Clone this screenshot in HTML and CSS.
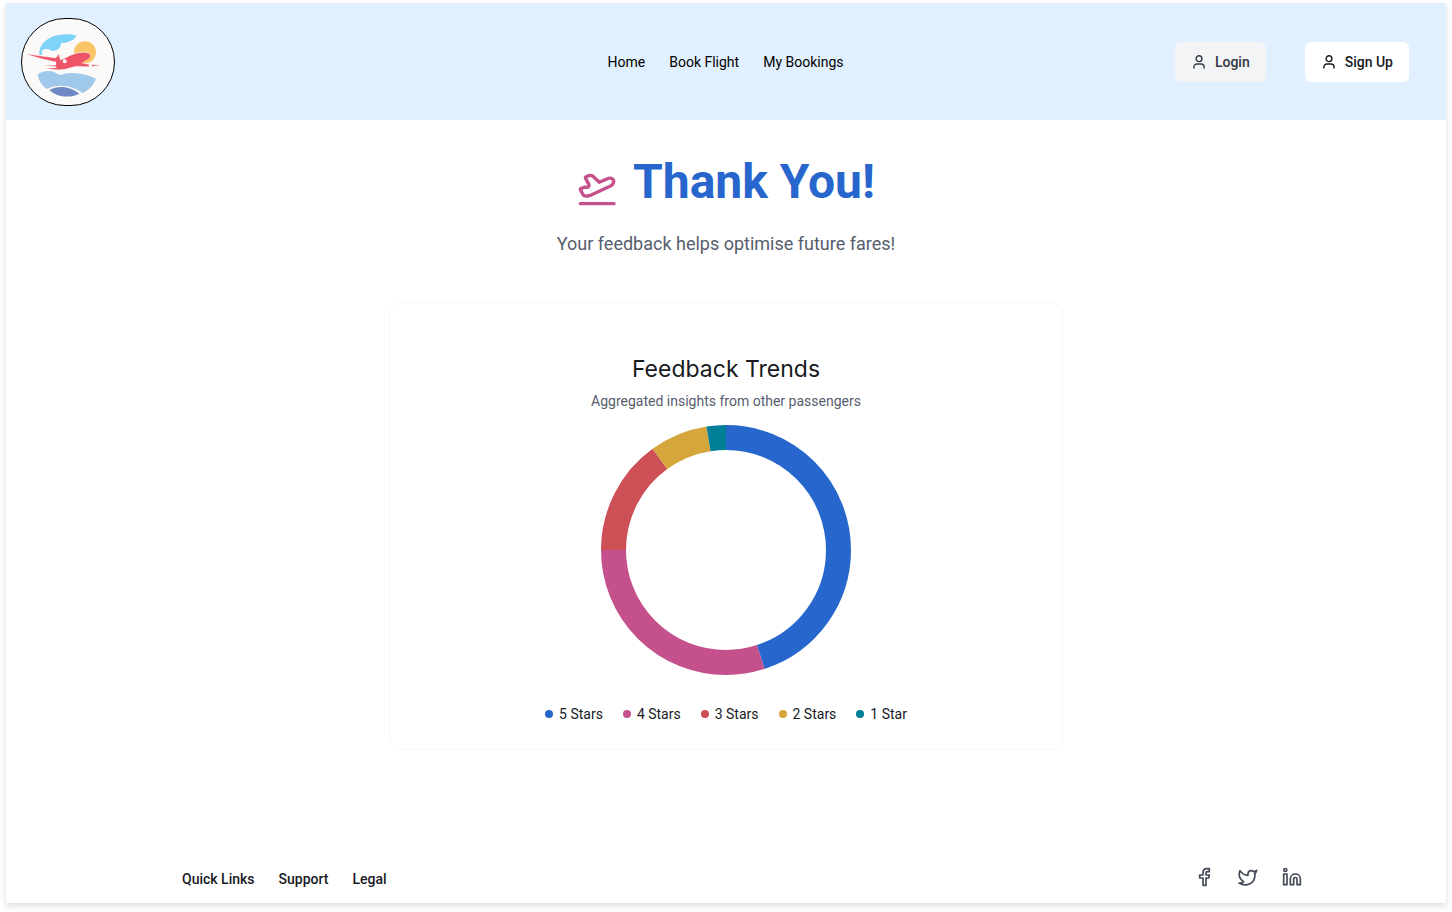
FILE: index.html
```html
<!DOCTYPE html>
<html lang="en">
<head>
<meta charset="utf-8">
<meta name="viewport" content="width=device-width, initial-scale=1">
<title>Thank You</title>
<link rel="stylesheet" href="styles.css">
</head>
<body>
<div class="page">
  <header class="header">
    <a class="logo" href="#" aria-label="Home page">
      <svg viewBox="66 57 276 258" aria-hidden="true">
        <path fill="#7dd3f8" d="M118 165C116 140 133 120 160 109C184 101 210 101 229 106C226 118 212 126 192 129L183 130C183 143 174 151 162 152C158 154 154 153 151 149C143 146 131 146 126 152C125 157 126 161 126 165Z"/>
        <circle cx="255" cy="157" r="33" fill="#f9c566"/>
        <path fill="#ee5468" stroke="#fcfaf8" stroke-width="1" d="M80 162L166 174L170 171C174 168 173 163 176 161L181 180L188 178L212 166C230 158 252 154 264 159C273 163 273 171 266 177L246 189L270 194L302 195L272 200L228 199L204 205C190 212 154 209 138 205L170 203L166 199L128 197L168 195L168 186C140 180 105 172 80 162Z"/>
        <path fill="none" stroke="#fcfaf8" stroke-width="1.5" d="M212 165C230 157 252 153 265 158"/>
        <circle cx="194" cy="184" r="6" fill="#fcfaf8"/>
        <circle cx="271" cy="197" r="5" fill="#fcfaf8"/>
        <path fill="#9fc8ea" d="M113 224C126 212 146 210 162 216C171 220 176 225 181 225C210 213 255 219 288 236C281 255 267 270 248 279C219 257 172 249 141 267C126 257 116 242 113 224Z"/>
        <path fill="#7088c4" d="M148 270C176 254 212 260 238 281C211 295 171 293 148 270Z"/>
      </svg>
    </a>
    <nav class="nav" aria-label="Main">
      <a href="#">Home</a>
      <a href="#">Book Flight</a>
      <a href="#">My Bookings</a>
    </nav>
    <div class="actions">
      <button class="btn btn-muted" type="button">
        <svg viewBox="0 0 16 16" aria-hidden="true"><circle cx="8" cy="4.7" r="2.9"/><path d="M2.9 14.6V13a3 3 0 0 1 3-3h4.2a3 3 0 0 1 3 3v1.6"/></svg>
        Login
      </button>
      <button class="btn btn-light" type="button">
        <svg viewBox="0 0 16 16" aria-hidden="true"><circle cx="8" cy="4.7" r="2.9"/><path d="M2.9 14.6V13a3 3 0 0 1 3-3h4.2a3 3 0 0 1 3 3v1.6"/></svg>
        Sign Up
      </button>
    </div>
  </header>

  <main class="main">
    <div class="title">
      <svg class="title-icon" viewBox="51 60 120 120" aria-hidden="true">
        <path d="M61 118L69 134Q73 140 82 138L92 136L153 107Q162 102 161 92Q157 82 146 85L118 97L99 79Q94 75 87 77L77 81Q75 83 77 86L87 104Q88 109 84 111Q80 113 76 111L71 113L63 115Q60 116 61 118Z"/>
        <path d="M61 161H162"/>
      </svg>
      <h1>Thank You!</h1>
    </div>
    <p class="subtitle">Your feedback helps optimise future fares!</p>

    <section class="card" aria-labelledby="trends">
      <h2 id="trends">Feedback Trends</h2>
      <p class="card-note">Aggregated insights from other passengers</p>
      <svg class="donut" viewBox="0 0 250 250" role="img" aria-label="Share of ratings by stars">
        <g transform="rotate(-90 125 125)">
          <circle class="s5" cx="125" cy="125" r="112.5" pathLength="1000" stroke-dasharray="450 550"/>
          <circle class="s4" cx="125" cy="125" r="112.5" pathLength="1000" stroke-dasharray="300 700" stroke-dashoffset="-450"/>
          <circle class="s3" cx="125" cy="125" r="112.5" pathLength="1000" stroke-dasharray="150 850" stroke-dashoffset="-750"/>
          <circle class="s2" cx="125" cy="125" r="112.5" pathLength="1000" stroke-dasharray="75 925" stroke-dashoffset="-900"/>
          <circle class="s1" cx="125" cy="125" r="112.5" pathLength="1000" stroke-dasharray="25 975" stroke-dashoffset="-975"/>
        </g>
      </svg>
      <ul class="legend">
        <li class="s5"><span>5 Stars</span></li>
        <li class="s4"><span>4 Stars</span></li>
        <li class="s3"><span>3 Stars</span></li>
        <li class="s2"><span>2 Stars</span></li>
        <li class="s1"><span>1 Star</span></li>
      </ul>
    </section>
  </main>

  <footer class="footer">
    <nav class="footer-links" aria-label="Footer">
      <a href="#">Quick Links</a>
      <a href="#">Support</a>
      <a href="#">Legal</a>
    </nav>
    <div class="social">
      <a href="#" aria-label="Facebook"><svg viewBox="42 51 60 60" aria-hidden="true"><path d="M88 56H81Q69 56 69 68V75H59V84H69V106H78V84H86L88 75H78V68Q78 65 81 65H88Z"/></svg></a>
      <a href="#" aria-label="Twitter"><svg viewBox="174 51 60 60" aria-hidden="true"><path d="M230 61Q226 64 221 65C214 58 203 63 204 73V76Q189 76 180 62Q172 83 191 95Q185 100 177 99C200 112 225 100 225 74L224 71Q229 67 230 61Z"/></svg></a>
      <a href="#" aria-label="LinkedIn"><svg viewBox="306 51 60 60" aria-hidden="true"><circle cx="316" cy="60" r="4.5"/><path d="M311 72H321V104H311ZM331 104V87C331 67 361 67 361 87V104H351V87C351 81 341 81 341 87V104Z"/></svg></a>
    </div>
  </footer>
</div>
</body>
</html>
```
FILE: styles.css
```css
* { box-sizing: border-box; }

body {
  margin: 0;
  padding: 3px 6px 9px;
  background: #fff;
  color: #171a1f;
  font: 14px/22px Roboto, "Liberation Sans", sans-serif;
}

a { color: inherit; text-decoration: none; }
svg { display: block; }
h1, h2, p, ul { margin: 0; padding: 0; }

.page {
  display: flex;
  flex-direction: column;
  min-height: calc(100vh - 12px);
  background: #fff;
  box-shadow: 0 3px 6px rgba(18, 15, 40, 0.14);
}

.header {
  display: grid;
  grid-template-columns: 1fr auto 1fr;
  align-items: center;
  padding: 15px 16px 14px 15px;
  background: #e0f0ff;
}

.logo {
  justify-self: start;
  width: 94px;
  height: 88px;
  border: 1px solid #000;
  border-radius: 44px;
  background: #fcfaf8;
  overflow: hidden;
}
.logo svg { width: 100%; height: 100%; }

.nav, .footer-links { display: flex; gap: 24px; }
.nav { color: #000; }

.actions {
  display: flex;
  justify-self: end;
  gap: 39px;
  margin-right: 21px;
}

.btn {
  display: flex;
  align-items: center;
  gap: 8px;
  height: 40px;
  padding: 0 16px;
  border: 0;
  border-radius: 6px;
  font: inherit;
  font-weight: 500;
  cursor: pointer;
}
.btn svg {
  width: 16px;
  height: 16px;
  fill: none;
  stroke: currentColor;
  stroke-width: 1.4;
}
.btn-muted { background: #f3f4f6; color: #323743; }
.btn-light { background: #fff; color: #171a1f; }

.main {
  display: flex;
  flex-direction: column;
  align-items: center;
  padding: 28px 24px;
}

.title { display: flex; align-items: center; gap: 16px; }
.title h1 {
  color: #2766cc;
  font-size: 48px;
  line-height: 68px;
  font-weight: 700;
}
.title-icon {
  width: 40px;
  height: 40px;
  margin-top: 16px;
  fill: none;
  stroke: #c4508c;
  stroke-width: 10;
  stroke-linecap: round;
  stroke-linejoin: round;
}

.subtitle {
  margin-top: 14px;
  color: #565d6d;
  font-size: 18px;
  line-height: 28px;
}

.card {
  display: flex;
  flex-direction: column;
  align-items: center;
  width: 100%;
  max-width: 674px;
  margin-top: 44px;
  padding: 48px 24px 24px;
  border: 1px solid #f8f8fa;
  border-radius: 12px;
}
.card h2 {
  font-family: Inter, "Liberation Sans", sans-serif;
  font-size: 23px;
  line-height: 36px;
  font-weight: 400;
}
.card-note { margin-top: 3px; color: #565d6d; }

.donut { width: 250px; height: 250px; margin-top: 13px; }
.donut circle { fill: none; stroke: currentColor; stroke-width: 25; }

.s5 { color: #2766cc; }
.s4 { color: #c4508c; }
.s3 { color: #cd5056; }
.s2 { color: #d4a63c; }
.s1 { color: #007f99; }

.legend {
  display: flex;
  flex-wrap: wrap;
  gap: 20px;
  margin-top: 28px;
  list-style: none;
}
.legend li { display: flex; align-items: center; gap: 6px; }
.legend li::before {
  content: "";
  width: 8px;
  height: 8px;
  border-radius: 50%;
  background: currentColor;
}
.legend span { color: #171a1f; }

.footer {
  display: flex;
  align-items: center;
  justify-content: space-between;
  margin-top: auto;
  padding: 0 144px 12px 176px;
  font-weight: 500;
}
.social {
  display: flex;
  gap: 24px;
  padding-bottom: 4px;
  color: #424856;
}
.social svg {
  width: 20px;
  height: 20px;
  fill: none;
  stroke: currentColor;
  stroke-width: 5;
  stroke-linejoin: round;
}
```
